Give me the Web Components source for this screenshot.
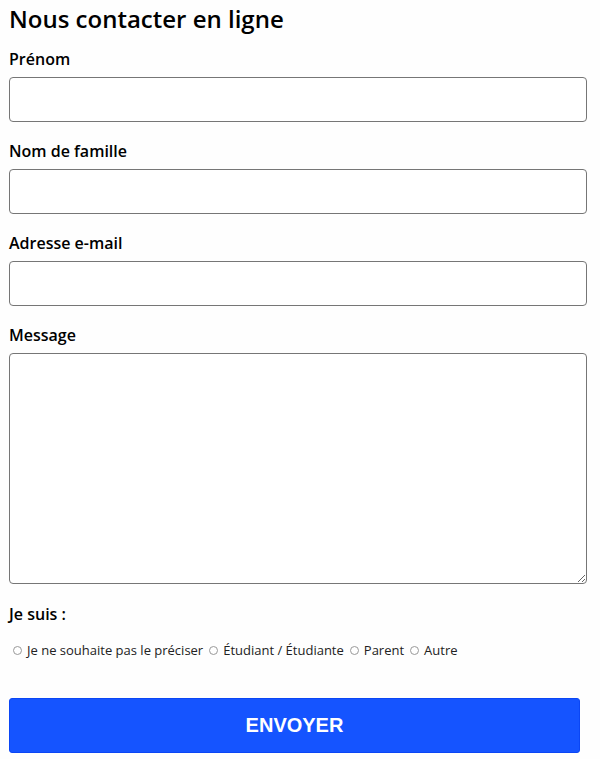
<!DOCTYPE html>
<html lang="fr">
<head>
<meta charset="utf-8">
<meta name="viewport" content="width=device-width, initial-scale=1">
<title>Nous contacter en ligne</title>
<style>
body { margin: 0; background: #fefefe; color: #000; font-family: "Open Sans", "Noto Sans", sans-serif; --strong: 600; }
</style>
</head>
<body>
<contact-form>
  <span slot="title">Nous contacter en ligne</span>
  <text-field label="Prénom" name="prenom"></text-field>
  <text-field label="Nom de famille" name="nom"></text-field>
  <text-field label="Adresse e-mail" name="email" type="email"></text-field>
  <text-field label="Message" name="message" multiline></text-field>
  <radio-group label="Je suis :" options="Je ne souhaite pas le préciser|Étudiant / Étudiante|Parent|Autre"></radio-group>
  <submit-button slot="action">ENVOYER</submit-button>
</contact-form>
<script>
class ContactForm extends HTMLElement {
  constructor() {
    super();
    this.attachShadow({ mode: 'open' }).innerHTML = `
      <style>
        :host { display: block; padding: 2px 13px 6px 9px; }
        h1 { margin: 0 0 12px; font-size: 24px; line-height: 34px; font-weight: var(--strong); }
        .fields { display: grid; gap: 18px; }
        .action { margin: 39px 7px 0 0; }
      </style>
      <h1><slot name="title"></slot></h1>
      <div class="fields"><slot></slot></div>
      <div class="action"><slot name="action"></slot></div>`;
  }
}

class TextField extends HTMLElement {
  connectedCallback() {
    const multiline = this.hasAttribute('multiline');
    const root = this.attachShadow({ mode: 'open' });
    root.innerHTML = `
      <style>
        :host { display: flex; flex-direction: column; gap: 7px; }
        label { font-size: 16px; line-height: 22px; font-weight: var(--strong); }
        input, textarea {
          display: block; box-sizing: border-box; width: 100%; margin: 0; padding: 8px;
          border: 1px solid #767676; border-radius: 4px; background: #fff;
          font: 16px/24px "Open Sans", "Noto Sans", sans-serif;
        }
        input { height: 45px; }
        textarea { height: 231px; resize: both; }
      </style>
      <label for="control"></label>
      ${multiline ? '<textarea id="control"></textarea>' : '<input id="control">'}`;
    root.querySelector('label').textContent = this.getAttribute('label');
    const control = root.getElementById('control');
    control.name = this.getAttribute('name');
    if (!multiline) control.type = this.getAttribute('type') || 'text';
  }
}

class RadioGroup extends HTMLElement {
  connectedCallback() {
    const root = this.attachShadow({ mode: 'open' });
    root.innerHTML = `
      <style>
        :host { display: block; }
        fieldset { margin: 0; padding: 1px 0 0; border: 0; min-width: 0; }
        legend { padding: 0; margin-bottom: 14px; font-size: 16px; line-height: 24px; font-weight: var(--strong); }
        .options { display: flex; flex-wrap: wrap; gap: 6px; padding-left: 4px; }
        label { display: flex; align-items: center; gap: 5px; color: #222; font-size: 13px; line-height: 18px; }
        input { appearance: none; box-sizing: border-box; width: 9px; height: 9px; margin: 0;
          border: 1px solid #999; border-radius: 50%; background: #fff; }
        input:checked { border: 3px solid #1554ff; }
      </style>
      <fieldset><legend></legend><div class="options"></div></fieldset>`;
    root.querySelector('legend').textContent = this.getAttribute('label');
    const box = root.querySelector('.options');
    this.getAttribute('options').split('|').forEach((text, i) => {
      const label = document.createElement('label');
      const input = document.createElement('input');
      input.type = 'radio';
      input.name = 'profil';
      input.id = 'option-' + i;
      input.value = text;
      label.htmlFor = input.id;
      const caption = document.createElement('span');
      caption.textContent = text;
      label.append(input, caption);
      box.append(label);
    });
  }
}

class SubmitButton extends HTMLElement {
  constructor() {
    super();
    this.attachShadow({ mode: 'open' }).innerHTML = `
      <style>
        :host { display: block; }
        button { display: block; box-sizing: border-box; width: 100%; padding: 15px 16px; margin: 0;
          border: 1px solid #0b46f5; border-radius: 3px; background: #1554ff; color: #fff;
          font: bold 20px/23px "Liberation Sans", Arial, sans-serif; cursor: pointer; }
      </style>
      <button type="submit"><slot></slot></button>`;
  }
}

customElements.define('contact-form', ContactForm);
customElements.define('text-field', TextField);
customElements.define('radio-group', RadioGroup);
customElements.define('submit-button', SubmitButton);
</script>
</body>
</html>
